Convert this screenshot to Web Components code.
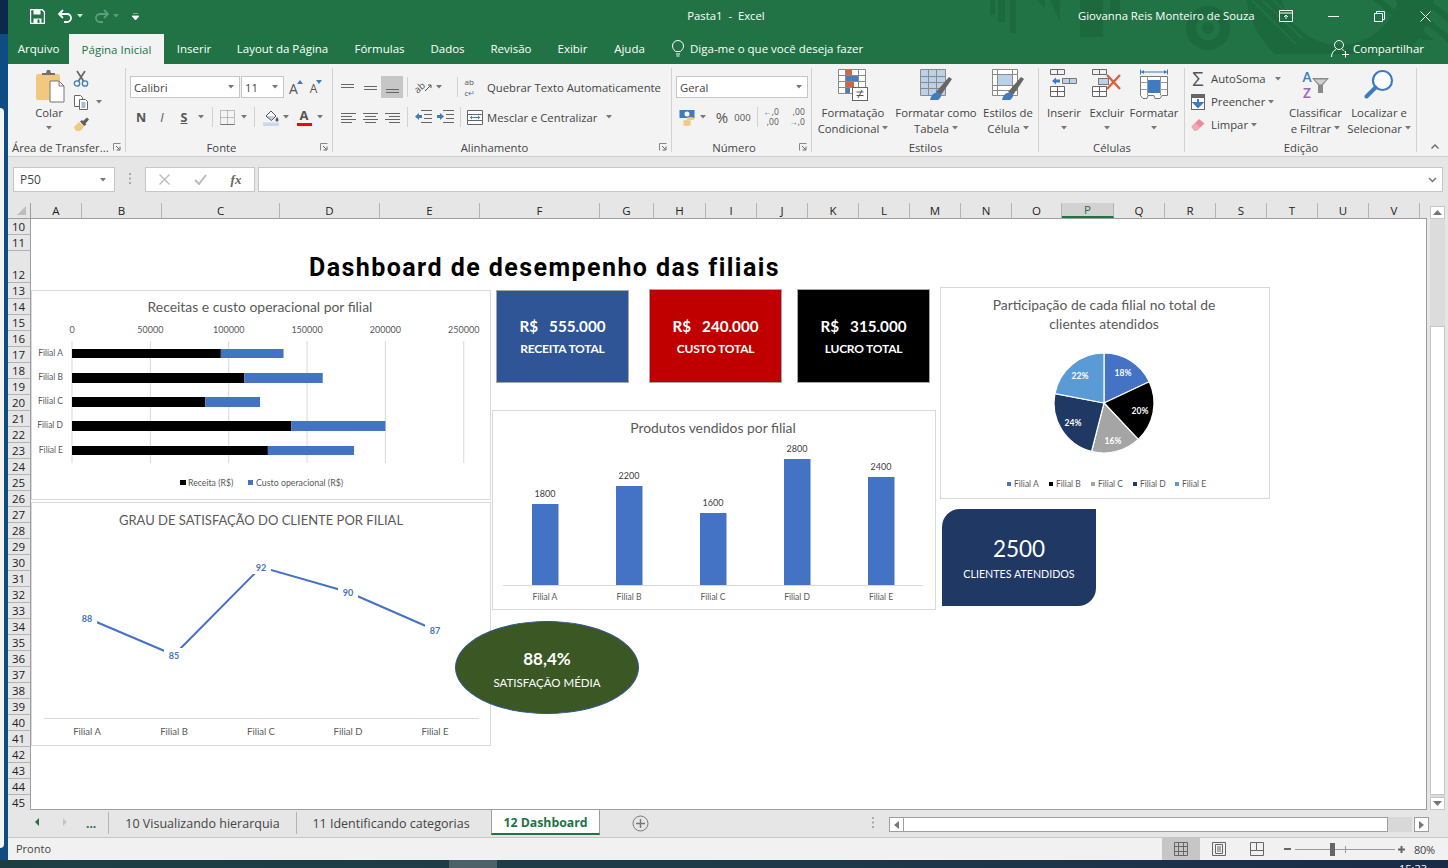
<!DOCTYPE html>
<html lang="pt-BR">
<head>
<meta charset="utf-8">
<title>Pasta1 - Excel</title>
<style>
html, body { margin: 0; width: 1448px; height: 868px; overflow: hidden; background: #0f4c81; }
body { display: flex; flex-direction: column; font-family: "Open Sans", "Noto Sans", sans-serif; }
.win { display: flex; flex-direction: column; margin-left: 8px; height: 860px; width: 1440px; }
.edge { position: absolute; left: 0; top: 108px; width: 3.5px; height: 740px; background: #f4f4f4; border-radius: 0 6px 6px 0; }
.edgetop { position: absolute; left: 0; top: 0; width: 8px; height: 34px; background: #0b2a4a; }
</style>
</head>
<body>
<div class="edgetop"></div><div class="edge"></div>
<div class="win">
  <xl-titlebar></xl-titlebar>
  <xl-menu></xl-menu>
  <xl-ribbon></xl-ribbon>
  <xl-formula></xl-formula>
  <xl-sheet>
    <xl-barh x="31" y="290" w="460" h="210"></xl-barh>
    <xl-line x="31" y="502" w="460" h="244"></xl-line>
    <xl-kpi x="496" y="290" w="133" h="93" bg="#2f5597" top="Y" value="R$   555.000" label="RECEITA TOTAL"></xl-kpi>
    <xl-kpi x="649" y="289" w="133" h="94" bg="#c00000" value="R$   240.000" label="CUSTO TOTAL"></xl-kpi>
    <xl-kpi x="797" y="289" w="133" h="94" bg="#000000" value="R$   315.000" label="LUCRO TOTAL"></xl-kpi>
    <xl-column x="492" y="410" w="444" h="200"></xl-column>
    <xl-pie x="940" y="287" w="330" h="212"></xl-pie>
    <xl-clients x="942" y="509" w="154" h="97"></xl-clients>
    <xl-oval x="455" y="621" w="184" h="93"></xl-oval>
  </xl-sheet>
  <xl-sheet-tabs></xl-sheet-tabs>
  <xl-status></xl-status>
</div>
<xl-taskbar></xl-taskbar>

<script>
const UI = `'Open Sans', 'Noto Sans', sans-serif`
const CAL = `Lato, 'Open Sans', sans-serif`

const svg = (w, h, body) => `<svg width="${w}" height="${h}" viewBox="0 0 ${w} ${h}" style="display:block;flex:none">${body}</svg>`
const caret = (c = "#777") => svg(6, 4, `<path d="M0 0h6L3 3.500z" fill="${c}"/>`)

// desenho de fundo do Office, dividido entre a barra de título e a de menus
const deco = top => `<svg class="deco" style="position:absolute;left:982px;top:${top}px" width="458" height="54" viewBox="0 0 458 54" fill="#1c693e">
    <rect x="0" y="0" width="5" height="15"/><rect x="8" y="0" width="7" height="22"/><rect x="20" y="0" width="6" height="33"/>
    <path d="M48 0h7v9zM60 0h10v22z"/><rect x="90" y="0" width="23" height="37"/><rect x="120" y="0" width="10" height="20"/>
    <path fill-rule="evenodd" d="M196 28a22 22 0 1 0 44 0a22 22 0 1 0-44 0zm10 0a12 12 0 1 1 24 0a12 12 0 1 1-24 0z"/><circle cx="218" cy="28" r="6"/>
    <path fill-rule="evenodd" d="M255-15a95 95 0 1 0 190 0a95 95 0 1 0-190 0zm35 0a60 60 0 1 1 120 0a60 60 0 1 1-120 0z"/>
    <path d="M383 0h9l52 40h-12zM405 0h9l44 34v8zM430 0h9l19 14v8z"/>
    <path d="M262 0l44 44M272 0l40 38M283 0l34 32" stroke="#217346" stroke-width="2"/>
</svg>`

const ICON = {
    paste: svg(32, 34, `<rect x="1" y="5" width="24" height="26" rx="2" fill="#f0c97e"/><path d="M7 6V4h4l1-3h3l1 3h4v2z" fill="#6f6f6f"/><path d="M15 12h9l5 5v16H15z" fill="#fff" stroke="#777"/><path d="M24 12v5h5" fill="none" stroke="#777"/>`),
    cut: svg(16, 17, `<path d="M4 1l6.500 10M12 1L5.500 11" stroke="#666" stroke-width="1.700" fill="none"/><circle cx="4" cy="13.500" r="2.700" fill="none" stroke="#3f7cbf" stroke-width="1.300"/><circle cx="12" cy="13.500" r="2.700" fill="none" stroke="#3f7cbf" stroke-width="1.300"/>`),
    copy: svg(16, 16, `<path d="M1.500 1.500h6l2 2v9h-8z" fill="#fff" stroke="#666"/><path d="M6.500 5.500h6l2 2v8h-8z" fill="#fff" stroke="#666"/><path d="M8.500 9h4M8.500 11h4M8.500 13h4" stroke="#3f7cbf"/>`),
    brush: svg(17, 15, `<path d="M1 10l5-5 5 5-4 4H3z" fill="#f0c97e"/><path d="M7 4.500l2-1.500 1 1 4-3.500 2 2-3.500 4 1 1L11 9z" fill="#5f5f5f"/>`),
    launcher: svg(8, 8, `<path d="M.5.500h7M.5.500v7" stroke="#888" fill="none"/><path d="M3 3l3.500 3.500M7 3.500V7H3.500" stroke="#666" fill="none"/>`),
    grid: svg(15, 15, `<path d="M.5.500h14v14H.500z" fill="none" stroke="#888" stroke-dasharray="1 1"/><path d="M7.500.500v14M.5 7.500h14" stroke="#888" stroke-dasharray="1 1"/><path d="M.5 14.500h14" stroke="#777"/>`),
    fill: svg(17, 17, `<path d="M3 7l5-5 5 5-4.500 4.500z" fill="#fff" stroke="#555"/><path d="M3 7h10l-4.500 4.500z" fill="#3f7cbf" opacity=".35"/><path d="M14 8c1 1.500 1.500 2.300 1.500 3a1.500 1.500 0 0 1-3 0c0-.7.5-1.500 1.500-3z" fill="#555"/><rect y="13.500" width="16" height="3.500" fill="#c9d8ee"/>`),
    outdent: svg(17, 14, `<path d="M6 .5h11M9 4.500h8M9 8.500h8M6 12.500h11" stroke="#666"/><path d="M0 6.500l4-3.500v2h3v3H4v2z" fill="#3f7cbf"/>`),
    indent: svg(17, 14, `<path d="M6 .5h11M9 4.500h8M9 8.500h8M6 12.500h11" stroke="#666"/><path d="M8 6.500l-4-3.500v2H1v3h3v2z" fill="#3f7cbf" transform="translate(-1 0)"/>`),
    merge: svg(16, 15, `<path d="M.5.500h15v14H.500z" fill="#fff" stroke="#666"/><path d="M.5 4.500h15M.5 10.500h15" stroke="#666"/><path d="M3 7.500h10" stroke="#3f7cbf"/><path d="M3 7.500l2-2v4zM13 7.500l-2-2v4z" fill="#3f7cbf"/>`),
    money: svg(17, 17, `<rect x=".5" y="1" width="15" height="8" fill="#3f7cbf"/><circle cx="8" cy="5" r="2.500" fill="#fff"/><ellipse cx="11.500" cy="9.500" rx="4" ry="1.500" fill="#f0c97e"/><ellipse cx="8" cy="12.500" rx="4" ry="1.500" fill="#f0c97e"/><ellipse cx="8" cy="15.200" rx="4" ry="1.500" fill="#f0c97e"/>`),
    cond: svg(30, 32, `<path d="M.5.500h27v24h-27zM7.500.500v24M20.500.500v24M.5 6.500h27M.5 12.500h27M.5 18.500h27" fill="#fff" stroke="#8a8a8a"/><rect x="8" y="1" width="6" height="5" fill="#d9623b"/><rect x="8" y="7" width="12" height="5" fill="#4a7ebb"/><rect x="8" y="13" width="8" height="5" fill="#d9623b"/><rect x="8" y="19" width="4" height="5" fill="#4a7ebb"/><rect x="14.500" y="18.500" width="15" height="13" fill="#fff" stroke="#666"/><path d="M18.500 23h7M18.500 26.500h7M24 21l-4 8" stroke="#555" fill="none"/>`),
    table: svg(32, 32, `<path d="M.5.500h25v26h-25z" fill="#fff" stroke="#8a8a8a"/><rect x="1" y="1" width="24" height="25" fill="#bcd0e8"/><path d="M.5 7.500h25M.5 13.500h25M.5 19.500h25M8.500.500v26M16.500.500v26" stroke="#8a8a8a" fill="none"/><path d="M16 23l13-15 3 2-11 16z" fill="#666"/><path d="M10 31c1-6 6-9 10-7 2 2 1 5-2 7z" fill="#3f7cbf"/>`),
    styles: svg(32, 32, `<path d="M.5.500h25v26h-25z" fill="#fff" stroke="#8a8a8a"/><rect x="5" y="6" width="16" height="10" fill="#bcd0e8"/><path d="M.5 5.500h25M.5 16.500h25M.5 21.500h25M5.500.500v26M20.500.500v26" stroke="#8a8a8a" fill="none"/><path d="M16 23l13-15 3 2-11 16z" fill="#666"/><path d="M10 31c1-6 6-9 10-7 2 2 1 5-2 7z" fill="#3f7cbf"/>`),
    insert: svg(28, 28, `<path d="M.5.500h14v5H.500zM7.500.500v5" fill="none" stroke="#666"/><path d="M12.500 9.500h14v5h-14zM19.500 9.500v5" fill="#bcd0e8" stroke="#777"/><path d="M2 12l4-3.500v2h4v3H6v2z" fill="#3f7cbf"/><path d="M.5 17.500h14v10H.500zM.5 22.500h14M7.500 17.500v10" fill="#fff" stroke="#666"/>`),
    remove: svg(30, 28, `<path d="M.5.500h14v5H.500zM7.500.500v5" fill="none" stroke="#666"/><rect x="6.500" y="9.500" width="10" height="6" fill="#bcd0e8" stroke="#777"/><path d="M.5 17.500h14v10H.500zM.5 22.500h14M7.500 17.500v10" fill="#fff" stroke="#666"/><path d="M15 6l13 14M28 6L15 20" stroke="#d9623b" stroke-width="2.400"/>`),
    format: svg(28, 31, `<path d="M1 3h26" stroke="#3f7cbf"/><path d="M.5.500v5M27.500.500v5" stroke="#3f7cbf"/><path d="M1 3l3-2v4zM27 3l-3-2v4z" fill="#3f7cbf"/><path d="M.5 7.500h27v19H22l-2 3h-5l-1-3H8l-1 3H3l-2.500-3z" fill="#fff" stroke="#777"/><path d="M7.500 7.500v19M20.500 7.500v19M.5 13.500h27M.5 20.500h27" stroke="#999" fill="none"/><rect x="8" y="11" width="12" height="13" fill="#3f7cbf"/>`),
    fillDown: svg(14, 16, `<rect x=".5" y=".5" width="13" height="15" fill="#fff" stroke="#666"/><rect width="14" height="4" fill="#666"/><path d="M7 5v6M7 13l-4-4h8z" stroke="#3f7cbf" fill="#3f7cbf" stroke-width="2"/>`),
    erase: svg(14, 13, `<path d="M.5 8.500L8 1l5.500 4.500L6 12.500H3z" fill="#ef8a9c"/><path d="M.5 8.500L4 5l5 4.500-3 3H3z" fill="#f3aab8"/>`),
    search: svg(30, 30, `<circle cx="18.500" cy="11.500" r="9.500" fill="#fff" stroke="#3f7cbf" stroke-width="2.200"/><path d="M11.500 18.500L2.500 27.500" stroke="#3f7cbf" stroke-width="4" stroke-linecap="round"/>`),
    funnel: svg(17, 15, `<path d="M0 0h17l-6 7v8H6V7z" fill="#8a8a8a"/><path d="M2.500 1.500h12l-5 5h-2z" fill="#cfcfcf"/>`),
    bulb: svg(12, 17, `<path d="M3.500 11.500C1 9 .5 7.500.5 6a5.500 5.500 0 0 1 11 0c0 1.500-.5 3-3 5.500zM4 14h4M4.500 16h3" fill="none" stroke="#fff"/>`),
    user: svg(19, 19, `<circle cx="8" cy="6" r="4.500" fill="none" stroke="#fff"/><path d="M.5 18c0-4 2-6.500 4.500-7.500M11 10.500c1 .4 2 1 2.500 1.700M14.500 12v6.500M11 15.500h7" fill="none" stroke="#fff"/>`)
}

class XlTitlebar extends HTMLElement {
    connectedCallback() {
        if (this.shadowRoot) return
        this.attachShadow({ mode: "open" }).innerHTML = `
        <style>
            :host { display: flex; align-items: center; height: 32px; background: #217346; color: #fff; font: 11.300px ${UI}; position: relative; overflow: hidden; flex: none; }
            .left { width: 640px; display: flex; align-items: center; padding-left: 22px; box-sizing: border-box; position: relative; }
            .title { width: 156px; text-align: center; white-space: pre; position: relative; margin-top: -1px; }
            .user { margin-left: 274px; width: 176px; position: relative; white-space: nowrap; margin-top: -1px; }
            .ctl { width: 46px; display: flex; justify-content: center; position: relative; }
        </style>
        ${deco(0)}
        <div class="left">
            ${svg(15, 15, `<path d="M.5.500h11.500l2.500 2.500v11.500H.500z" fill="none" stroke="#fff" stroke-width="1.400"/><rect x="3.500" y="1" width="7" height="4.500" fill="#fff"/><rect x="3.500" y="9.500" width="8" height="5" fill="#fff"/><rect x="7.500" y="10.500" width="2" height="3.500" fill="#217346"/>`)}
            <span style="width:13px"></span>
            ${svg(15, 14, `<path d="M5 1L1 5l4 4" fill="none" stroke="#fff" stroke-width="1.800"/><path d="M1 5h8a4 4 0 0 1 0 8H6" fill="none" stroke="#fff" stroke-width="1.800"/>`)}
            <span style="width:4px"></span>${caret("#d7e6dd")}
            <span style="width:11px"></span>
            ${svg(15, 14, `<path d="M10 1l4 4-4 4" fill="none" stroke="#5f9c7c" stroke-width="1.800"/><path d="M14 5H6a4 4 0 0 0 0 8h3" fill="none" stroke="#5f9c7c" stroke-width="1.800"/>`)}
            <span style="width:4px"></span>${caret("#5f9c7c")}
            <span style="width:13px"></span>
            ${svg(7, 7, `<path d="M1 0h5M0 3h7L3.500 7z" stroke="#fff" fill="#fff" stroke-width=".8"/>`)}
        </div>
        <div class="title">Pasta1  -  Excel</div>
        <div class="user">Giovanna Reis Monteiro de Souza</div>
        <div class="ctl" style="width:36px;margin-left:14px">${svg(14, 12, `<path d="M.5.500h13v11H.500zM.5 3h13" fill="none" stroke="#fff"/><path d="M7 9V5M5 7l2-2 2 2" fill="none" stroke="#fff"/>`)}</div>
        <div class="ctl" style="margin-left:6px">${svg(11, 1, `<rect width="11" height="1" fill="#fff"/>`)}</div>
        <div class="ctl">${svg(11, 11, `<path d="M2.500 2.500V.5h8v8h-2M.5 2.500h8v8h-8z" fill="none" stroke="#fff"/>`)}</div>
        <div class="ctl">${svg(11, 11, `<path d="M.5.500l10 10M10.500.500l-10 10" stroke="#fff"/>`)}</div>`
    }
}

class XlMenu extends HTMLElement {
    connectedCallback() {
        if (this.shadowRoot) return
        const tabs = [["Arquivo", 61], ["Página Inicial", 95, 1], ["Inserir", 60], ["Layout da Página", 117], ["Fórmulas", 77], ["Dados", 59], ["Revisão", 68], ["Exibir", 55], ["Ajuda", 59]]
        this.attachShadow({ mode: "open" }).innerHTML = `
        <style>
            :host { display: flex; height: 32px; background: #217346; color: #fff; font: 11.500px ${UI}; position: relative; overflow: hidden; flex: none; }
            div { display: flex; align-items: center; justify-content: center; white-space: nowrap; box-sizing: border-box; position: relative; }
            .on { background: #f3f3f3; color: #217346; margin-top: 2px; }
            .tell { margin-left: 13px; gap: 6px; }
            .share { margin-left: auto; gap: 3px; padding-right: 24px; }
        </style>
        ${deco(-32)}
        ${tabs.map(t => `<div class="${t[2] ? "on" : ""}" style="width:${t[1]}px">${t[0]}</div>`).join("")}
        <div class="tell">${ICON.bulb}<span>Diga-me o que você deseja fazer</span></div>
        <div class="share">${ICON.user}<span>Compartilhar</span></div>`
    }
}

class XlGroup extends HTMLElement {
    connectedCallback() {
        if (this.shadowRoot) return
        const launcher = this.hasAttribute("launcher")
        const align = this.getAttribute("align") || "center"
        this.attachShadow({ mode: "open" }).innerHTML = `
        <style>
            :host { display: flex; flex-direction: column; height: 92px; box-sizing: border-box; position: relative; flex: none; }
            :host::after { content: ""; position: absolute; right: 0; top: 4px; bottom: 4px; width: 1px; background: #d2d2d2; }
            .body { height: 75px; padding-top: 3px; box-sizing: border-box; }
            .foot { height: 16px; display: flex; align-items: center; }
            .name { flex: 1; text-align: ${align}; color: #444; white-space: nowrap; font-size: 11.300px; }
            .launch { width: 16px; display: ${launcher ? "flex" : "none"}; justify-content: center; padding-right: 2px; box-sizing: border-box; }
        </style>
        <div class="body"><slot></slot></div>
        <div class="foot"><div class="name" style="padding-left:${this.getAttribute("pad") || 0}px">${this.getAttribute("name")}</div><div class="launch">${ICON.launcher}</div></div>`
    }
}

class XlBig extends HTMLElement {
    connectedCallback() {
        if (this.shadowRoot) return
        const lines = (this.getAttribute("label") || "").split("|")
        const inline = this.hasAttribute("inline")
        this.attachShadow({ mode: "open" }).innerHTML = `
        <style>
            :host { display: flex; flex-direction: column; align-items: center; flex: none; color: #444; font-size: 11.300px; }
            .ic { height: 36px; margin-top: 2px; display: flex; align-items: flex-start; justify-content: center; }
            .t { line-height: 15.500px; text-align: center; white-space: nowrap; display: flex; align-items: center; justify-content: center; gap: 3px; }
            .c { margin-top: 5px; }
        </style>
        <div class="ic"><slot></slot></div>
        ${lines.map((l, i) => `<div class="t">${l}${inline && i === lines.length - 1 ? caret() : ""}</div>`).join("")}
        ${inline ? "" : `<div class="t c">${caret()}</div>`}`
    }
}

class XlRibbon extends HTMLElement {
    connectedCallback() {
        if (this.shadowRoot) return
        const gap = w => `<i style="width:${w}px"></i>`
        const sep = `<b class="sep"></b>`
        const box = (w, html, extra = "") => `<span class="b" style="width:${w}px;${extra}">${html}</span>`
        const c = w => box(w, caret())
        const al = rows => svg(15, 15, rows.map(r => `<path d="M${r[0]} ${r[2] + .5}h${r[1]}" stroke="#666"/>`).join(""))
        this.attachShadow({ mode: "open" }).innerHTML = `
        <style>
            :host { display: flex; height: 93px; background: #f3f3f3; border-bottom: 1px solid #d0d0d0; box-sizing: border-box; font: 11.300px ${UI}; color: #444; flex: none; }
            .row { display: flex; align-items: center; height: 22px; }
            .b { display: inline-flex; align-items: center; justify-content: center; flex: none; height: 22px; }
            i { display: block; flex: none; }
            .sep { display: block; width: 1px; height: 20px; background: #d2d2d2; flex: none; }
            .sel { display: flex; align-items: center; justify-content: space-between; background: #fff; border: 1px solid #c6c6c6; height: 22px; box-sizing: border-box; padding: 0 5px 0 3px; flex: none; white-space: nowrap; }
            .flex { display: flex; }
            .col { display: flex; flex-direction: column; }
            .sm { display: flex; align-items: center; height: 23px; white-space: nowrap; }
            .dec { font: 8.500px/10px ${UI}; color: #555; text-align: right; display: block; }
            .collapse { margin: 0 9px 7px auto; align-self: flex-end; }
        </style>
        <xl-group name="Área de Transfer..." launcher align="left" pad="4" style="width:118px">
            <div class="flex">
                <xl-big label="Colar" style="width:46px;margin-left:18px"><span style="display:block;margin-left:3px">${ICON.paste}</span></xl-big>
                <div class="col">
                    <div class="sm">${box(18, ICON.cut)}</div>
                    <div class="sm">${box(18, ICON.copy)}${gap(6)}${caret()}</div>
                    <div class="sm">${box(18, ICON.brush)}</div>
                </div>
            </div>
        </xl-group>
        <xl-group name="Fonte" launcher style="width:207px">
            <div class="row" style="margin:9px 0 8px 4px">
                <div class="sel" style="width:110px">Calibri${caret()}</div>
                <div class="sel" style="width:43px;margin-left:1px">11${caret()}</div>
                ${gap(2)}
                ${box(20, `<span style="font-size:14px;color:#555;margin-top:2px">A</span>${svg(6, 4, `<path d="M3 0l3 4H0z" fill="#3f7cbf"/>`).replace("display:block", "display:block;margin:-10px 0 0 -1px")}`)}
                ${box(20, `<span style="font-size:12px;color:#555;margin-top:3px">A</span>${svg(6, 4, `<path d="M3 4l3-4H0z" fill="#3f7cbf"/>`).replace("display:block", "display:block;margin:-10px 0 0 -1px")}`)}
            </div>
            <div class="row" style="margin-left:4px">
                ${box(22, `<span style="font:700 12.500px ${UI};color:#555">N</span>`)}
                ${box(20, `<span style="font:italic 12.500px ${UI};color:#555">I</span>`)}
                ${box(24, `<span style="font:700 12.500px ${UI};color:#555;text-decoration:underline">S</span>`)}
                ${c(10)}${gap(6)}${sep}${gap(5)}
                ${box(18, ICON.grid)}${gap(3)}${c(10)}${gap(5)}${sep}${gap(7)}
                ${box(18, ICON.fill)}${gap(1)}${c(10)}${gap(3)}
                ${box(20, `<span style="display:flex;flex-direction:column;align-items:center;font:700 13px/13px ${UI};color:#555">A<span style="display:block;width:15px;height:3px;background:#f00;margin-top:1px"></span></span>`)}
                ${gap(1)}${c(10)}
            </div>
        </xl-group>
        <xl-group name="Alinhamento" launcher style="width:339px">
            <div class="row" style="margin:9px 0 8px 3px">
                ${box(23, al([[1, 13, 4], [1, 13, 7]]))}${box(22, al([[1, 13, 6], [1, 13, 9]]))}
                ${box(22, al([[1, 13, 9], [1, 13, 12]]), "background:#c6c6c6")}
                ${gap(4)}${sep}${gap(4)}
                ${box(22, `<span style="font:9.500px ${UI};color:#555;transform:rotate(-40deg);display:block">ab</span>${svg(7, 7, `<path d="M0 7l6-6M3 1h3v3" fill="none" stroke="#555"/>`)}`)}
                ${gap(1)}${c(8)}${gap(14)}${sep}${gap(3)}
                ${box(18, `<span style="font:8px/11px ${UI};color:#555;display:block">ab<br>c<span style="color:#3f7cbf">↵</span></span>`)}
                ${gap(8)}<span>Quebrar Texto Automaticamente</span>
            </div>
            <div class="row" style="margin-left:4px">
                ${box(22, al([[0, 15, 3], [0, 11, 6], [0, 15, 9], [0, 11, 12]]))}${box(22, al([[0, 15, 3], [2, 11, 6], [0, 15, 9], [2, 11, 12]]))}${box(22, al([[0, 15, 3], [4, 11, 6], [0, 15, 9], [4, 11, 12]]))}
                ${gap(4)}${sep}${gap(4)}
                ${box(22, ICON.outdent)}${box(22, ICON.indent)}
                ${gap(4)}${sep}${gap(6)}
                ${box(16, ICON.merge)}${gap(4)}<span>Mesclar e Centralizar</span>${gap(9)}${caret()}
            </div>
        </xl-group>
        <xl-group name="Número" launcher style="width:140px">
            <div class="row" style="margin:9px 0 8px 4px"><div class="sel" style="width:132px">Geral${caret()}</div></div>
            <div class="row" style="margin-left:5px">
                ${box(20, ICON.money)}${gap(1)}${c(10)}${gap(4)}
                ${box(20, `<span style="font:15px ${UI};color:#555">%</span>`)}
                ${box(21, `<span style="font:9.500px ${UI};color:#555">000</span>`)}
                ${gap(4)}${sep}${gap(3)}
                ${box(20, `<span class="dec"><span style="color:#3f7cbf">←</span>,0<br>,00</span>`)}
                ${gap(6)}
                ${box(20, `<span class="dec">,00<br><span style="color:#3f7cbf">→</span>,0</span>`)}
            </div>
        </xl-group>
        <xl-group name="Estilos" style="width:227px">
            <div class="flex">
                <xl-big label="Formatação|Condicional" inline style="width:82px">${ICON.cond}</xl-big>
                <xl-big label="Formatar como|Tabela" inline style="width:84px">${ICON.table}</xl-big>
                <xl-big label="Estilos de|Célula" inline style="width:60px">${ICON.styles}</xl-big>
            </div>
        </xl-group>
        <xl-group name="Células" style="width:146px">
            <div class="flex" style="padding-left:3px">
                <xl-big label="Inserir" style="width:44px">${ICON.insert}</xl-big>
                <xl-big label="Excluir" style="width:42px">${ICON.remove}</xl-big>
                <xl-big label="Formatar" style="width:52px">${ICON.format}</xl-big>
            </div>
        </xl-group>
        <xl-group name="Edição" style="width:232px">
            <div class="flex">
                <div class="col" style="width:100px">
                    <div class="sm">${box(26, `<span style="font:20px/20px ${UI};color:#555">Σ</span>`)}<span>AutoSoma</span>${gap(9)}${caret()}</div>
                    <div class="sm">${box(26, ICON.fillDown)}<span>Preencher</span>${gap(3)}${caret()}</div>
                    <div class="sm">${box(26, ICON.erase)}<span>Limpar</span>${gap(3)}${caret()}</div>
                </div>
                <xl-big label="Classificar|e Filtrar" inline style="width:61px">
                    <span style="display:flex;align-items:center"><span style="font:700 13px/16px ${CAL};color:#3f7cbf;text-align:center;display:block">A<br><span style="color:#9b6bc0">Z</span></span>${ICON.funnel}</span>
                </xl-big>
                <xl-big label="Localizar e|Selecionar" inline style="width:66px">${ICON.search}</xl-big>
            </div>
        </xl-group>
        <div class="collapse">${svg(8, 5, `<path d="M.5 4.500L4 1l3.500 3.500" fill="none" stroke="#666" stroke-width="1.300"/>`)}</div>`
    }
}

class XlFormula extends HTMLElement {
    connectedCallback() {
        if (this.shadowRoot) return
        this.attachShadow({ mode: "open" }).innerHTML = `
        <style>
            :host { display: flex; align-items: flex-start; height: 46px; background: #e6e6e6; padding: 10px 5px 0; box-sizing: border-box; font: 12px ${UI}; color: #444; flex: none; }
            .f { height: 25px; background: #fff; border: 1px solid #c6c6c6; box-sizing: border-box; display: flex; align-items: center; flex: none; }
            .name { width: 102px; justify-content: space-between; padding: 0 8px 0 6px; }
            .dots { width: 30px; display: flex; justify-content: center; padding-top: 6px; }
            .fn { width: 110px; }
            .fn span { width: 36px; display: flex; justify-content: center; }
            .val { width: 1185px; margin-left: 3px; justify-content: flex-end; padding-right: 5px; }
            .fx { font: italic 700 13px "Liberation Serif", serif; color: #666; }
        </style>
        <div class="f name">P50 ${caret()}</div>
        <div class="dots">${svg(2, 11, `<path d="M0 0h2v2H0zM0 4.500h2v2H0zM0 9h2v2H0z" fill="#aaa"/>`)}</div>
        <div class="f fn">
            <span>${svg(11, 11, `<path d="M.5.500l10 10M10.500.500l-10 10" stroke="#bbb" stroke-width="1.400"/>`)}</span>
            <span>${svg(13, 11, `<path d="M1 6l4 4 7-9" fill="none" stroke="#bbb" stroke-width="2"/>`)}</span>
            <span class="fx">fx</span>
        </div>
        <div class="f val">${svg(9, 6, `<path d="M1 1l3.500 3.500L8 1" fill="none" stroke="#777" stroke-width="1.500"/>`)}</div>`
    }
}

class XlSheet extends HTMLElement {
    connectedCallback() {
        if (this.shadowRoot) return
        const cols = [["A", 51], ["B", 80], ["C", 118], ["D", 100], ["E", 100], ["F", 120], ["G", 54], ["H", 52], ["I", 51], ["J", 51], ["K", 51], ["L", 51], ["M", 51], ["N", 51], ["O", 50], ["P", 52], ["Q", 51], ["R", 51], ["S", 51], ["T", 51], ["U", 51], ["V", 51]]
        let rows = ""
        for (let n = 10; n <= 45; n++) rows += `<div class="r" style="height:${n === 12 ? 32 : 16}px">${n}</div>`
        this.attachShadow({ mode: "open" }).innerHTML = `
        <style>
            :host { display: grid; grid-template-columns: 23px 1396px 21px; grid-template-rows: 16px 591px; height: 607px; background: #e6e6e6; font: 11.500px ${UI}; color: #222; flex: none; }
            .corner { display: flex; justify-content: flex-end; align-items: flex-end; padding: 0 4px 3px 0; border-bottom: 1px solid #9e9e9e; border-right: 1px solid #9e9e9e; box-sizing: border-box; }
            .heads { display: flex; border-bottom: 1px solid #9e9e9e; box-sizing: border-box; overflow: hidden; }
            .h { display: flex; align-items: center; justify-content: center; border-right: 1px solid #b4b4b4; box-sizing: border-box; flex: none; }
            .h.on { background: #d2d2d2; border-bottom: 2px solid #217346; color: #217346; }
            .rows { overflow: hidden; border-right: 1px solid #9e9e9e; }
            .r { display: flex; align-items: flex-end; justify-content: center; box-sizing: border-box; border-bottom: 1px solid #b4b4b4; padding-right: 1px; line-height: 15px; }
            .canvas { background: #fff; position: relative; overflow: hidden; border-right: 1px solid #9e9e9e; border-bottom: 1px solid #9e9e9e; box-sizing: border-box; }
            h1 { margin: 33px 0 0 278px; font: 700 25px/32px Roboto, sans-serif; letter-spacing: 1.440px; color: #000; white-space: nowrap; }
            .bar { grid-row: 1 / span 2; grid-column: 3; display: flex; flex-direction: column; padding: 3px 2px 0 3px; }
            .btn { height: 13px; background: #fff; border: 1px solid #c6c6c6; box-sizing: border-box; display: flex; align-items: center; justify-content: center; flex: none; width: 15px; }
            .track { background: #dcdcdc; width: 15px; height: 107px; flex: none; }
            .thumb { background: #fff; border: 1px solid #c6c6c6; box-sizing: border-box; width: 15px; height: 469px; flex: none; }
        </style>
        <div class="corner">${svg(9, 9, `<path d="M9 0v9H0z" fill="#bdbdbd"/>`)}</div>
        <div class="heads">
            ${cols.map(c => `<div class="h ${c[0] === "P" ? "on" : ""}" style="width:${c[1]}px">${c[0]}</div>`).join("")}
        </div>
        <div class="bar">
            <div class="btn">${svg(9, 5, `<path d="M4.500 0L9 5H0z" fill="#777"/>`)}</div>
            <div class="track"></div>
            <div class="thumb"></div>
            <div style="height:2px;background:#dcdcdc;width:15px;flex:none"></div>
            <div class="btn">${svg(9, 5, `<path d="M4.500 5L9 0H0z" fill="#777"/>`)}</div>
        </div>
        <div class="rows">${rows}</div>
        <div class="canvas">
            <h1>Dashboard de desempenho das filiais</h1>
            <slot></slot>
        </div>`
    }
}

// base das formas que flutuam sobre a planilha, posição em coordenadas da tela
class XlFloat extends HTMLElement {
    box() {
        const a = n => +this.getAttribute(n)
        return { x: a("x"), y: a("y"), w: a("w"), h: a("h") }
    }
    hostCss() {
        const { x, y, w, h } = this.box()
        return `:host { position: absolute; left: ${x - 31}px; top: ${y - 219}px; width: ${w}px; height: ${h}px; box-sizing: border-box; display: block; }`
    }
    chart(body) {
        const { x, y, w, h } = this.box()
        this.attachShadow({ mode: "open" }).innerHTML = `
        <style>
            ${this.hostCss()}
            :host { background: #fff; border: 1px solid #d9d9d9; }
            svg { position: absolute; left: -1px; top: -1px; display: block; }
            text { font-family: ${CAL}; fill: #595959; font-size: 9px; dominant-baseline: central; }
            .title { font-size: 13.900px; text-anchor: middle; }
            .mid { text-anchor: middle; }
            .end { text-anchor: end; }
            .w { fill: #fff; font-weight: 700; }
        </style>
        <svg width="${w}" height="${h}" viewBox="${x} ${y} ${w} ${h}">${body}</svg>`
    }
}

class XlBarh extends XlFloat {
    connectedCallback() {
        if (this.shadowRoot) return
        const scale = 313.4 / 200000, left = 72
        const data = [["Filial A", 95000, 40000, 349, 9, 352.5], ["Filial B", 110000, 50000, 373, 10, 377], ["Filial C", 85000, 35000, 397, 10, 401], ["Filial D", 140000, 60000, 421, 10, 425], ["Filial E", 125000, 55000, 446, 9, 450]]
        let s = `<text class="title" x="260" y="306">Receitas e custo operacional por filial</text>`
        for (let v = 0; v <= 250000; v += 50000) {
            const x = left + v * scale
            s += `<text class="mid" x="${x}" y="329">${v}</text><path d="M${x} 341V463" stroke="#d9d9d9"/>`
        }
        data.forEach(d => {
            s += `<text class="end" x="63" y="${d[5]}" style="font-size:8.500px">${d[0]}</text>
            <rect x="${left}" y="${d[3]}" width="${d[1] * scale}" height="${d[4]}" fill="#000"/>
            <rect x="${left + d[1] * scale}" y="${d[3]}" width="${d[2] * scale}" height="${d[4]}" fill="#4472c4"/>`
        })
        s += `<rect x="180" y="480" width="6" height="5" fill="#000"/><text x="188" y="482.500" style="font-size:8.700px">Receita (R$)</text>
        <rect x="248" y="480" width="5" height="5" fill="#4472c4"/><text x="256" y="482.500" style="font-size:8.800px">Custo operacional (R$)</text>`
        this.chart(s)
    }
}

class XlLine extends XlFloat {
    connectedCallback() {
        if (this.shadowRoot) return
        const pts = [["Filial A", 87, 618, 88], ["Filial B", 174, 655, 85], ["Filial C", 261, 567, 92], ["Filial D", 348, 592, 90], ["Filial E", 435, 630, 87]]
        let s = `<text class="title" x="261" y="520" style="font-size:13px">GRAU DE SATISFAÇÃO DO CLIENTE POR FILIAL</text>
        <path d="M44 718.500H479" stroke="#d9d9d9"/>
        <path d="M${pts.map(p => p[1] + " " + p[2]).join("L")}" fill="none" stroke="#4472c4" stroke-width="2"/>`
        pts.forEach(p => {
            s += `<rect x="${p[1] - 10}" y="${p[2] - 7}" width="20" height="14" fill="#fff"/>
            <text class="mid" x="${p[1]}" y="${p[2]}" style="fill:#4472c4;font-weight:700">${p[3]}</text>
            <text class="mid" x="${p[1]}" y="731" style="font-size:9.500px">${p[0]}</text>`
        })
        this.chart(s)
    }
}

class XlColumn extends XlFloat {
    connectedCallback() {
        if (this.shadowRoot) return
        const bars = [["Filial A", 545, 1800, 504], ["Filial B", 629, 2200, 486], ["Filial C", 713, 1600, 513], ["Filial D", 797, 2800, 459], ["Filial E", 881, 2400, 477]]
        let s = `<text class="title" x="713" y="427">Produtos vendidos por filial</text><path d="M503 585.500H923" stroke="#d9d9d9"/>`
        bars.forEach(b => {
            s += `<rect x="${b[1] - 13}" y="${b[3]}" width="26.500" height="${585 - b[3]}" fill="#4472c4"/>
            <text class="mid" x="${b[1]}" y="${b[3] - 11}" style="fill:#404040">${b[2]}</text>
            <text class="mid" x="${b[1]}" y="597" style="font-size:8.500px">${b[0]}</text>`
        })
        this.chart(s)
    }
}

class XlPie extends XlFloat {
    connectedCallback() {
        if (this.shadowRoot) return
        const cx = 1104, cy = 403, r = 50
        const parts = [[18, "#4472c4", 1123, 373], [20, "#000000", 1140, 411], [16, "#a5a5a5", 1113, 441], [24, "#203864", 1073, 423], [22, "#5b9bd5", 1080, 376]]
        let a = -Math.PI / 2, s = `<text class="title" x="1104" y="304">Participação de cada filial no total de</text><text class="title" x="1104" y="323">clientes atendidos</text>`
        parts.forEach(p => {
            const b = a + p[0] / 100 * Math.PI * 2
            const pt = t => `${(cx + r * Math.cos(t)).toFixed(2)} ${(cy + r * Math.sin(t)).toFixed(2)}`
            s += `<path d="M${cx} ${cy}L${pt(a)}A${r} ${r} 0 0 1 ${pt(b)}z" fill="${p[1]}" stroke="#fff" stroke-width="1.200"/>`
            a = b
        })
        parts.forEach(p => { s += `<text class="mid w" x="${p[2]}" y="${p[3]}" style="font-size:8.500px">${p[0]}%</text>` })
        "ABCDE".split("").forEach((l, i) => {
            const x = [1007, 1049, 1091, 1133, 1175][i]
            s += `<rect x="${x}" y="482" width="4" height="4" fill="${parts[i][1]}"/><text x="${x + 7}" y="484" style="font-size:8.500px">Filial ${l}</text>`
        })
        this.chart(s)
    }
}

class XlKpi extends XlFloat {
    connectedCallback() {
        if (this.shadowRoot) return
        this.attachShadow({ mode: "open" }).innerHTML = `
        <style>
            ${this.hostCss()}
            :host { background: ${this.getAttribute("bg")}; border: 1px solid #a6a6a6; color: #fff; font-family: ${CAL}; text-align: center; }
            .v { font-size: 15.200px; font-weight: 700; white-space: pre; line-height: 20px; margin-top: ${this.hasAttribute("top") ? 25 : 26}px; }
            .l { font-size: 12px; font-weight: 700; line-height: 16px; margin-top: 5px; letter-spacing: -.2px; }
        </style>
        <div class="v">${this.getAttribute("value")}</div>
        <div class="l">${this.getAttribute("label")}</div>`
    }
}

class XlClients extends XlFloat {
    connectedCallback() {
        if (this.shadowRoot) return
        this.attachShadow({ mode: "open" }).innerHTML = `
        <style>
            ${this.hostCss()}
            :host { background: #1f3864; color: #fff; font-family: ${CAL}; text-align: center; border-radius: 18px 0 18px 0; }
            .v { font-size: 22.500px; line-height: 26px; margin-top: 27px; }
            .l { font-size: 10.700px; line-height: 14px; margin-top: 5px; }
        </style>
        <div class="v">2500</div><div class="l">CLIENTES ATENDIDOS</div>`
    }
}

class XlOval extends XlFloat {
    connectedCallback() {
        if (this.shadowRoot) return
        this.attachShadow({ mode: "open" }).innerHTML = `
        <style>
            ${this.hostCss()}
            :host { background: #3b5724; border: 1px solid #2f5597; border-radius: 50%; color: #fff; font-family: ${CAL}; text-align: center; }
            .v { font-size: 17px; font-weight: 700; line-height: 22px; margin-top: 26px; }
            .l { font-size: 11.500px; line-height: 16px; margin-top: 5px; }
        </style>
        <div class="v">88,4%</div><div class="l">SATISFAÇÃO MÉDIA</div>`
    }
}

class XlSheetTabs extends HTMLElement {
    connectedCallback() {
        if (this.shadowRoot) return
        const btn = (p) => `<div class="btn">${svg(5, 8, `<path d="${p}" fill="#777"/>`)}</div>`
        this.attachShadow({ mode: "open" }).innerHTML = `
        <style>
            :host { display: flex; align-items: flex-start; height: 27px; background: #e6e6e6; font: 12.500px ${UI}; color: #444; border-bottom: 1px solid #c6c6c6; flex: none; }
            .nav { width: 100px; display: flex; align-items: center; height: 24px; position: relative; }
            .tab { display: flex; align-items: center; justify-content: center; height: 22px; white-space: nowrap; margin-top: 2px; border-left: 1px solid #b4b4b4; box-sizing: border-box; }
            .on { background: #fff; color: #217346; font-weight: 700; height: 25px; margin-top: 0; padding-top: 2px; border-bottom: 2px solid #217346; border-right: 1px solid #9e9e9e; border-left: 1px solid #9e9e9e; font-size: 12.300px; }
            .btn { width: 15px; height: 15px; background: #fff; border: 1px solid #9e9e9e; box-sizing: border-box; display: flex; align-items: center; justify-content: center; flex: none; }
            .hs { display: flex; margin-left: 14px; margin-top: 7px; align-items: flex-start; }
        </style>
        <div class="nav">
            <span style="margin-left:27px">${svg(4, 8, `<path d="M4 0v8L0 4z" fill="#217346"/>`)}</span>
            <span style="margin-left:24px">${svg(4, 8, `<path d="M0 0v8l4-4z" fill="#c6c6c6"/>`)}</span>
            <span style="margin-left:19px;font:700 12px ${UI};color:#217346;line-height:14px;margin-top:3px">...</span>
        </div>
        <div class="tab" style="width:188px">10 Visualizando hierarquia</div>
        <div class="tab" style="width:195px;padding-right:6px">11 Identificando categorias</div>
        <div class="tab on" style="width:109px">12 Dashboard</div>
        <span style="margin:5px 0 0 32px;width:18px">${svg(17, 17, `<circle cx="8.500" cy="8.500" r="7.500" fill="none" stroke="#777"/><path d="M8.500 4v9M4 8.500h9" stroke="#777" stroke-width="1.400"/>`)}</span>
        <span style="margin:7px 0 0 222px;width:3px">${svg(2, 11, `<path d="M0 0h2v2H0zM0 4.500h2v2H0zM0 9h2v2H0z" fill="#aaa"/>`)}</span>
        <div class="hs">
            ${btn("M5 0v8L0 4z")}
            <div style="width:484px;height:15px;background:#fff;border:1px solid #9e9e9e;border-left:0;box-sizing:border-box"></div>
            <div style="width:24px;height:15px;background:#d8d8d8"></div>
            <span style="width:2px"></span>
            ${btn("M0 0v8l5-4z")}
        </div>`
    }
}

class XlStatus extends HTMLElement {
    connectedCallback() {
        if (this.shadowRoot) return
        this.attachShadow({ mode: "open" }).innerHTML = `
        <style>
            :host { display: flex; align-items: center; height: 22px; background: #f1f1f1; font: 11px ${UI}; color: #444; flex: none; }
            .pronto { margin-left: 8px; width: 1146px; margin-top: -2px; }
            .v { width: 38px; height: 22px; display: flex; align-items: center; justify-content: center; flex: none; }
            .slider { width: 100px; height: 1px; background: #999; position: relative; margin: 0 3px 0 4px; flex: none; }
            .slider b { position: absolute; left: 35px; top: -6px; width: 5px; height: 13px; background: #666; }
            .slider i { position: absolute; left: 50px; top: -3px; width: 1px; height: 7px; background: #999; }
        </style>
        <div class="pronto">Pronto</div>
        <div class="v" style="background:#c6c6c6">${svg(14, 14, `<path d="M.5.500h13v13H.500zM4.500.500v13M9.500.500v13M.5 4.500h13M.5 9.500h13" fill="none" stroke="#666"/>`)}</div>
        <div class="v">${svg(14, 14, `<path d="M.5.500h13v13H.500z" fill="none" stroke="#666"/><path d="M3.500 2.500h7v9h-7zM5 5h4M5 7h4M5 9h4" fill="none" stroke="#666"/>`)}</div>
        <div class="v">${svg(14, 14, `<path d="M.5.500h13v13H.500zM.5 8.500h6v-8M6.500 8.500h7" fill="none" stroke="#666"/>`)}</div>
        <span style="width:8px"></span>
        ${svg(7, 2, `<rect width="7" height="2" fill="#666"/>`)}
        <div class="slider"><i></i><b></b></div>
        ${svg(7, 7, `<path d="M0 2.500h7v2H0zM2.500 0h2v7h-2z" fill="#666"/>`)}
        <span style="margin-left:9px;letter-spacing:-.3px">80%</span>`
    }
}

class XlTaskbar extends HTMLElement {
    connectedCallback() {
        if (this.shadowRoot) return
        this.attachShadow({ mode: "open" }).innerHTML = `
        <style>
            :host { display: flex; height: 8px; overflow: hidden; background: linear-gradient(90deg, #1d3f44, #1e3a4a 55%, #1a2b48); font: 11px ${UI}; color: #fff; flex: none; }
            .app { margin-left: 449px; width: 48px; background: #4d6168; }
            .clock { margin-left: 902px; line-height: 15px; margin-top: 1px; }
        </style>
        <div class="app"></div><div class="clock">15:33</div>`
    }
}

customElements.define("xl-titlebar", XlTitlebar)
customElements.define("xl-menu", XlMenu)
customElements.define("xl-group", XlGroup)
customElements.define("xl-big", XlBig)
customElements.define("xl-ribbon", XlRibbon)
customElements.define("xl-formula", XlFormula)
customElements.define("xl-sheet", XlSheet)
customElements.define("xl-barh", XlBarh)
customElements.define("xl-line", XlLine)
customElements.define("xl-column", XlColumn)
customElements.define("xl-pie", XlPie)
customElements.define("xl-kpi", XlKpi)
customElements.define("xl-clients", XlClients)
customElements.define("xl-oval", XlOval)
customElements.define("xl-sheet-tabs", XlSheetTabs)
customElements.define("xl-status", XlStatus)
customElements.define("xl-taskbar", XlTaskbar)
</script>
</body>
</html>
